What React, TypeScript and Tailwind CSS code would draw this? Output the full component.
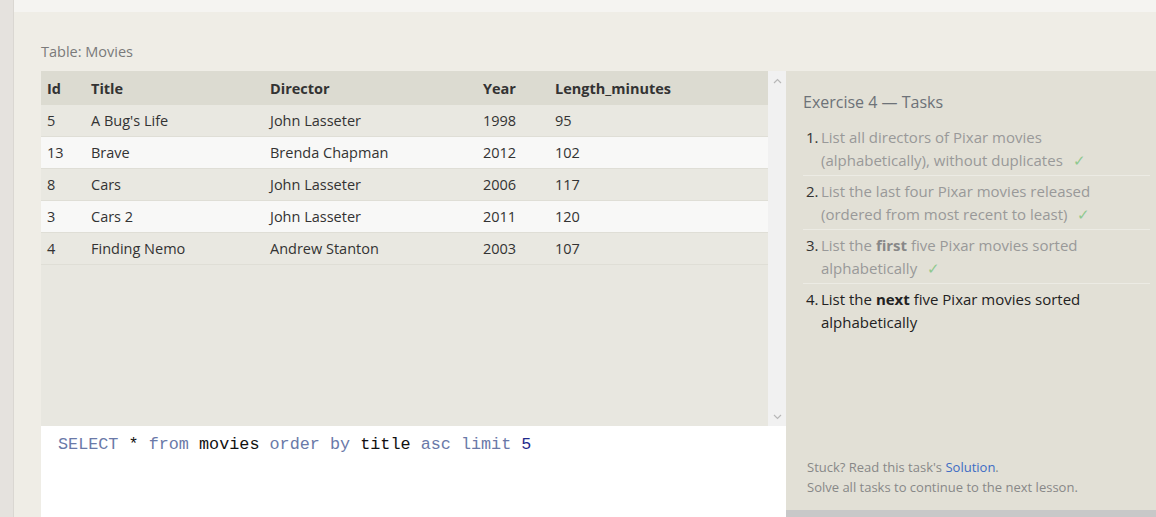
import React from "react";

const rows = [
  ["5", "A Bug's Life", "John Lasseter", "1998", "95"],
  ["13", "Brave", "Brenda Chapman", "2012", "102"],
  ["8", "Cars", "John Lasseter", "2006", "117"],
  ["3", "Cars 2", "John Lasseter", "2011", "120"],
  ["4", "Finding Nemo", "Andrew Stanton", "2003", "107"],
];

function Check() {
  return <span className="ml-[10px] text-[#8fc98f]">✓</span>;
}

export default function App() {
  return (
    <div
      className="w-[1156px] h-[517px] overflow-hidden flex bg-[#efede6]"
      style={{ fontFamily: "'Open Sans', 'Noto Sans', sans-serif" }}
    >
      <div className="w-[14px] shrink-0 bg-[#e5e2de] border-r border-[#dad7d2]" />
      <div className="flex-1 flex flex-col">
        <div className="h-[12px] bg-[#f5f4f1]" />
        <div className="pl-[27px] pt-[30px] pb-[9px] text-[14.5px] leading-[20px] text-[#7a7a7a]">
          Table: Movies
        </div>
        <div className="flex flex-1 pl-[27px]">
          <div className="w-[745px] flex flex-col">
            <div className="h-[355px] flex">
              <div className="w-[727px] bg-[#e8e7e0] text-[14.5px] text-[#333]">
                <div className="h-[34px] pt-[1px] bg-[#dcdbd1] flex items-center font-bold">
                  <div className="w-[50px] pl-[6px]">Id</div>
                  <div className="w-[179px]">Title</div>
                  <div className="w-[213px]">Director</div>
                  <div className="w-[72px]">Year</div>
                  <div>Length_minutes</div>
                </div>
                {rows.map((r, i) => (
                  <div
                    key={i}
                    className={
                      "h-[32px] pt-[1px] flex items-center border-b border-[#dfded6] " +
                      (i % 2 === 0 ? "bg-[#e9e8e1]" : "bg-[#f8f8f7]")
                    }
                  >
                    <div className="w-[50px] pl-[6px]">{r[0]}</div>
                    <div className="w-[179px]">{r[1]}</div>
                    <div className="w-[213px]">{r[2]}</div>
                    <div className="w-[72px]">{r[3]}</div>
                    <div>{r[4]}</div>
                  </div>
                ))}
              </div>
              <div className="w-[18px] bg-[#f1f1f1] flex flex-col justify-between items-center py-[4px] text-[#b5b5b5]">
                <svg width="9" height="6" viewBox="0 0 9 6" className="mt-[3px]">
                  <path d="M1 5 L4.5 1.5 L8 5" fill="none" stroke="#b8b8b8" strokeWidth="1.2" />
                </svg>
                <svg width="9" height="6" viewBox="0 0 9 6" className="mb-[2px]">
                  <path d="M1 1 L4.5 4.5 L8 1" fill="none" stroke="#b8b8b8" strokeWidth="1.2" />
                </svg>
              </div>
            </div>
            <div
              className="flex-1 bg-white pl-[17px] pt-[8px] text-[16.8px] leading-[22px] text-[#111]"
              style={{ fontFamily: "'Liberation Mono', 'Courier New', monospace" }}
            >
              <span className="text-[#6a79a8]">SELECT</span> * <span className="text-[#6a79a8]">from</span> movies{" "}
              <span className="text-[#6a79a8]">order by</span> title{" "}
              <span className="text-[#6a79a8]">asc limit</span>{" "}
              <span className="text-[#1f2a8c]">5</span>
            </div>
          </div>
          <div className="flex-1 flex flex-col">
            <div className="flex-1 bg-[#e2e0d6] pl-[17px] pr-[6px] pt-[20px] flex flex-col">
              <div className="text-[16px] leading-[22px] text-[#6d7278]">Exercise 4 — Tasks</div>
              <ol className="mt-[13px] text-[15px] leading-[23px]">
                <li className="flex pb-[3px] border-b border-[#ecebe4]">
                  <span className="w-[18px] pl-[3px] text-[#333]">1.</span>
                  <span className="text-[#999]">
                    List all directors of Pixar movies
                    <br />
                    (alphabetically), without duplicates
                    <Check />
                  </span>
                </li>
                <li className="flex pt-[4px] pb-[3px] border-b border-[#ecebe4]">
                  <span className="w-[18px] pl-[3px] text-[#333]">2.</span>
                  <span className="text-[#999]">
                    List the last four Pixar movies released
                    <br />
                    (ordered from most recent to least)
                    <Check />
                  </span>
                </li>
                <li className="flex pt-[4px] pb-[3px] border-b border-[#ecebe4]">
                  <span className="w-[18px] pl-[3px] text-[#333]">3.</span>
                  <span className="text-[#999]">
                    List the <b className="text-[#888]">first</b> five Pixar movies sorted
                    <br />
                    alphabetically
                    <Check />
                  </span>
                </li>
                <li className="flex pt-[4px] text-[#222]">
                  <span className="w-[18px] pl-[3px]">4.</span>
                  <span>
                    List the <b>next</b> five Pixar movies sorted
                    <br />
                    alphabetically
                  </span>
                </li>
              </ol>
              <div className="mt-auto mb-[13px] pl-[4px] text-[13px] leading-[20px] text-[#888]">
                <div>
                  Stuck? Read this task's <span className="text-[#3d6cc4]">Solution</span>.
                </div>
                <div>Solve all tasks to continue to the next lesson.</div>
              </div>
            </div>
            <div className="h-[7px] bg-[#c8c8c8]" />
          </div>
        </div>
      </div>
    </div>
  );
}
